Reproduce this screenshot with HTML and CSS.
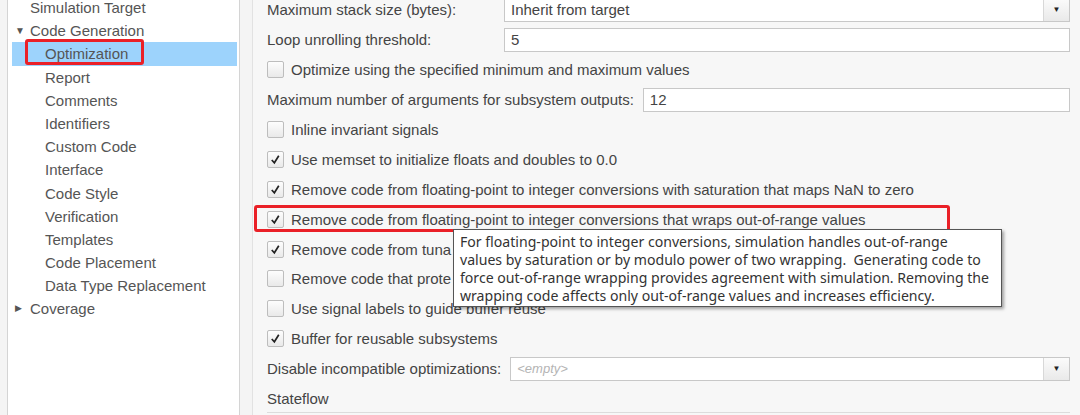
FILE: index.html
```html
<!DOCTYPE html>
<html>
<head>
	<title>Configuration Parameters</title>
	<link rel="stylesheet" href="styles.css">
</head>
<body>
	<div class="app">
		<div class="sidebar">
			<ul class="tree">
				<li class="node">Simulation Target</li>
				<li class="node"><span class="twisty">&#9660;</span>Code Generation</li>
				<li class="leaf selected"><span class="mark-box"></span>Optimization</li>
				<li class="leaf">Report</li>
				<li class="leaf">Comments</li>
				<li class="leaf">Identifiers</li>
				<li class="leaf">Custom Code</li>
				<li class="leaf">Interface</li>
				<li class="leaf">Code Style</li>
				<li class="leaf">Verification</li>
				<li class="leaf">Templates</li>
				<li class="leaf">Code Placement</li>
				<li class="leaf">Data Type Replacement</li>
				<li class="node"><span class="twisty small">&#9654;</span>Coverage</li>
			</ul>
		</div>
		<div class="gutter"></div>
		<div class="main">
			<div class="row">
				<span class="label wide">Maximum stack size (bytes):</span>
				<div class="combo">
					<span class="value">Inherit from target</span>
					<span class="drop">&#9660;</span>
				</div>
			</div>
			<div class="row">
				<span class="label wide">Loop unrolling threshold:</span>
				<div class="field">5</div>
			</div>
			<div class="row">
				<span class="check"></span>
				<span class="text">Optimize using the specified minimum and maximum values</span>
			</div>
			<div class="row">
				<span class="label">Maximum number of arguments for subsystem outputs:</span>
				<div class="field">12</div>
			</div>
			<div class="row">
				<span class="check"></span>
				<span class="text">Inline invariant signals</span>
			</div>
			<div class="row">
				<span class="check on"><svg viewBox="0 0 16 16"><polyline points="4,8.5 6.8,11.5 11.5,4"/></svg></span>
				<span class="text">Use memset to initialize floats and doubles to 0.0</span>
			</div>
			<div class="row">
				<span class="check on"><svg viewBox="0 0 16 16"><polyline points="4,8.5 6.8,11.5 11.5,4"/></svg></span>
				<span class="text">Remove code from floating-point to integer conversions with saturation that maps NaN to zero</span>
			</div>
			<div class="row marked">
				<span class="mark-row"></span>
				<span class="check on"><svg viewBox="0 0 16 16"><polyline points="4,8.5 6.8,11.5 11.5,4"/></svg></span>
				<span class="text">Remove code from floating-point to integer conversions that wraps out-of-range values</span>
				<div class="tooltip">For floating-point to integer conversions, simulation handles out-of-range<br>values by saturation or by modulo power of two wrapping.&nbsp; Generating code to<br>force out-of-range wrapping provides agreement with simulation. Removing the<br>wrapping code affects only out-of-range values and increases efficiency.</div>
			</div>
			<div class="row">
				<span class="check on"><svg viewBox="0 0 16 16"><polyline points="4,8.5 6.8,11.5 11.5,4"/></svg></span>
				<span class="text">Remove code from tuna</span>
			</div>
			<div class="row">
				<span class="check"></span>
				<span class="text">Remove code that prote</span>
			</div>
			<div class="row">
				<span class="check"></span>
				<span class="text">Use signal labels to guide buffer reuse</span>
			</div>
			<div class="row">
				<span class="check on"><svg viewBox="0 0 16 16"><polyline points="4,8.5 6.8,11.5 11.5,4"/></svg></span>
				<span class="text">Buffer for reusable subsystems</span>
			</div>
			<div class="row">
				<span class="label">Disable incompatible optimizations:</span>
				<div class="combo">
					<span class="value empty">&lt;empty&gt;</span>
					<span class="drop">&#9660;</span>
				</div>
			</div>
			<div class="row section">
				<span class="label">Stateflow</span>
			</div>
		</div>
	</div>
</body>
</html>
```

FILE: styles.css
```css
*{
	margin: 0px;
	padding: 0px;
	box-sizing: border-box;
}
body{
	background-color: #f4f4f4;
	font-family: "Liberation Sans", Arial, sans-serif;
	font-size: 15px;
}
.app{
	display: flex;
	height: 415px;
	overflow: hidden;
}
.sidebar{
	margin-left: 7px;
	width: 233px;
	background-color: #fff;
	border-left: 1px solid #d4d4d4;
	border-right: 1px solid #d4d4d4;
}
.tree{
	list-style: none;
	margin-top: -4px;
	margin-left: 4px;
	margin-right: 2px;
}
.tree li{
	height: 23.2px;
	line-height: 23.2px;
	color: #555;
	white-space: nowrap;
}
.node{
	padding-left: 18px;
}
.leaf{
	padding-left: 33px;
}
.twisty{
	display: inline-block;
	width: 15px;
	margin-left: -15px;
	font-size: 10px;
	color: #555;
	vertical-align: top;
}
.twisty.small{
	font-size: 9px;
}
.selected{
	position: relative;
	background-color: #9dd3fc;
	color: #3c3c3c;
}
.mark-box{
	position: absolute;
	left: 13px;
	top: -3px;
	width: 119px;
	height: 26px;
	border: 3px solid #ea2027;
	border-radius: 3px;
}
.gutter{
	width: 13px;
	border-right: 1px solid #e2e2e2;
}
.main{
	flex: 1;
	background-color: #f7f7f7;
	padding-left: 14px;
	padding-right: 10px;
	margin-top: -5px;
}
.row{
	display: flex;
	align-items: center;
	height: 29.9px;
	color: #444;
	white-space: nowrap;
	position: relative;
}
.label{
	margin-right: 9px;
}
.label.wide{
	width: 237px;
	margin-right: 0px;
}
.combo, .field{
	flex: 1;
	height: 24px;
	display: flex;
	align-items: center;
	background-color: #fff;
	border: 1px solid #c8c8c8;
	color: #444;
}
.field{
	padding-left: 6px;
}
.value{
	flex: 1;
	padding-left: 6px;
}
.value.empty{
	color: #b4b4b4;
	font-style: italic;
	font-size: 13px;
}
.drop{
	width: 26px;
	height: 22px;
	line-height: 22px;
	text-align: center;
	font-size: 8px;
	color: #222;
	border-left: 1px solid #d8d8d8;
	background: linear-gradient(#fbfbfb, #e9e9e9);
}
.check{
	width: 17px;
	height: 17px;
	margin-right: 7px;
	border: 1px solid #bdbdbd;
	border-radius: 2px;
	background: linear-gradient(#fdfdfd, #e9e9e9);
}
.check svg{
	display: block;
	width: 15px;
	height: 15px;
}
.check polyline{
	fill: none;
	stroke: #222;
	stroke-width: 1.8;
}
.mark-row{
	position: absolute;
	left: -13px;
	top: 1px;
	width: 696px;
	height: 27px;
	border: 3px solid #ea2027;
	border-radius: 3px;
}
.tooltip{
	position: absolute;
	left: 186px;
	top: 25px;
	width: 549px;
	padding: 3px 0px 2px 6px;
	background-color: #fff;
	border: 1px solid #555;
	box-shadow: 2px 2px 3px rgba(0,0,0,0.35);
	font-family: "Noto Sans", "Noto Sans CJK SC", sans-serif;
	font-size: 14.1px;
	line-height: 17.8px;
	color: #333;
	z-index: 2;
}
.section{
	border-bottom: 1px solid #dcdcdc;
}
```
